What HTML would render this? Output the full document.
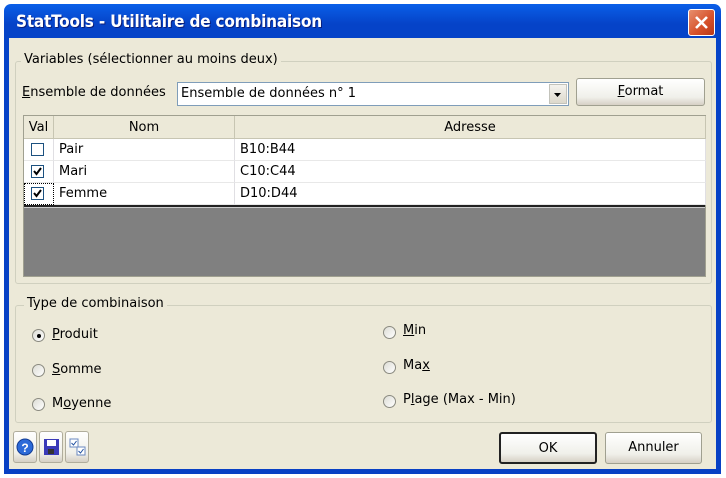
<!DOCTYPE html>
<html><head><meta charset="utf-8"><style>
*{box-sizing:border-box}
body{margin:0;width:726px;height:478px;background:#fff;position:relative;overflow:hidden;font-family:"DejaVu Sans","Liberation Sans",sans-serif;font-size:13px;color:#000}
.a{position:absolute}
.win{left:4px;top:4px;width:717px;height:470px;border-radius:7px 7px 0 0;background:linear-gradient(#0a5fe8,#0543c8 20px,#0840c4)}
.title{left:16px;top:12px;color:#fff;font-weight:bold;font-size:17px;font-family:"DejaVu Sans Condensed","DejaVu Sans",sans-serif;text-shadow:1px 1px #0a1e7a;letter-spacing:-0.2px}
.close{left:688px;top:9px;width:27px;height:27px;border:1px solid #fff;border-radius:3px;background:linear-gradient(135deg,#e7906e,#d6502a 60%,#b83818)}
.body{left:9px;top:38px;width:707px;height:431px;background:#ece9d8}
.gb{border:1px solid #d0d0bf;border-radius:3px}
.lbl{background:#ece9d8;padding:0 3px}
.btn{border:1px solid #003c74;border-radius:3px;background:linear-gradient(#fff,#f0f0ea 70%,#d6d0c5);text-align:center}
.cell{position:absolute;height:22px;line-height:22px;padding-left:5px;border-right:1px solid #e0dfe3;border-bottom:1px solid #e8e8e8;background:#fff}
.hd{background:#ece9d8;border-right:1px solid #c7c5b2;border-bottom:1px solid #c7c5b2;text-align:center;padding:0;height:23px;line-height:23px}
.cb{position:absolute;width:13px;height:13px;border:1px solid #1c5180;background:#fff}
.rd{position:absolute;width:13px;height:13px;border-radius:50%;border:1px solid #8a8a80;background:linear-gradient(135deg,#dcdcd4,#fff)}
u{text-decoration:underline}
</style></head><body>
<div class="a win"></div>
<div class="a title">StatTools - Utilitaire de combinaison</div>
<div class="a close"><svg width="25" height="25" viewBox="0 0 25 25"><path d="M7 7L18 18M18 7L7 18" stroke="#fff" stroke-width="2.6"/></svg></div>
<div class="a body"></div>

<div class="a gb" style="left:15px;top:61px;width:697px;height:223px"></div>
<div class="a lbl" style="left:21px;top:52px">Variables (sélectionner au moins deux)</div>
<div class="a" style="left:22px;top:85px"><u>E</u>nsemble de données</div>
<div class="a" style="left:177px;top:82px;width:392px;height:24px;border:1px solid #7f9db9;background:#fff;padding:3px 3px;">Ensemble de données n° 1</div>
<div class="a" style="left:549px;top:84px;width:18px;height:20px;background:linear-gradient(#f4f3ee,#ddd9cc);border:1px solid #c3c3bb"><svg width="16" height="18"><path d="M4 8h7l-3.5 4z" fill="#000"/></svg></div>
<div class="a btn" style="left:576px;top:78px;width:129px;height:28px;line-height:26px;border-color:#a0a090"><u>F</u>ormat</div>

<div class="a" style="left:23px;top:115px;width:683px;height:162px;background:#808080;border:1px solid #a0a090">
 <div class="cell hd" style="left:0;top:0;width:30px">Val</div>
 <div class="cell hd" style="left:30px;top:0;width:181px">Nom</div>
 <div class="cell hd" style="left:211px;top:0;width:471px">Adresse</div>
 <div class="cell" style="left:0;top:23px;width:30px"></div><div class="cb" style="left:7px;top:27px"></div>
 <div class="cell" style="left:30px;top:23px;width:181px">Pair</div>
 <div class="cell" style="left:211px;top:23px;width:471px">B10:B44</div>
 <div class="cell" style="left:0;top:45px;width:30px"></div><div class="cb" style="left:7px;top:49px"><svg width="11" height="11"><path d="M2 5l2.5 3L9 2" stroke="#000" stroke-width="2" fill="none"/></svg></div>
 <div class="cell" style="left:30px;top:45px;width:181px">Mari</div>
 <div class="cell" style="left:211px;top:45px;width:471px">C10:C44</div>
 <div class="cell" style="left:0;top:67px;width:30px;border:1px dotted #000"></div><div class="cb" style="left:7px;top:71px"><svg width="11" height="11"><path d="M2 5l2.5 3L9 2" stroke="#000" stroke-width="2" fill="none"/></svg></div>
 <div class="cell" style="left:30px;top:67px;width:181px">Femme</div>
 <div class="cell" style="left:211px;top:67px;width:471px">D10:D44</div>
 <div class="a" style="left:0;top:89px;width:681px;height:3px;border-top:2px solid #222;border-bottom:1px solid #ccc"></div>
</div>

<div class="a gb" style="left:15px;top:305px;width:697px;height:118px"></div>
<div class="a lbl" style="left:24px;top:296px">Type de combinaison</div>
<div class="rd" style="left:32px;top:329px"><div style="position:absolute;left:4px;top:4px;width:4px;height:4px;border-radius:50%;background:#000"></div></div>
<div class="a" style="left:52px;top:327px"><u>P</u>roduit</div>
<div class="rd" style="left:32px;top:364px"></div><div class="a" style="left:52px;top:362px"><u>S</u>omme</div>
<div class="rd" style="left:32px;top:398px"></div><div class="a" style="left:52px;top:396px">M<u>o</u>yenne</div>
<div class="rd" style="left:383px;top:326px"></div><div class="a" style="left:403px;top:323px"><u>M</u>in</div>
<div class="rd" style="left:383px;top:361px"></div><div class="a" style="left:403px;top:358px">Ma<u>x</u></div>
<div class="rd" style="left:383px;top:395px"></div><div class="a" style="left:403px;top:392px">P<u>l</u>age (Max - Min)</div>

<div class="a btn" style="left:13px;top:431px;width:24px;height:32px;border-color:#b0ad9c"><svg width="22" height="30"><circle cx="11" cy="15" r="8" fill="#2c6ad8" stroke="#123c94"/><text x="11" y="20" font-size="12" font-weight="bold" fill="#fff" text-anchor="middle" font-family="Liberation Sans">?</text></svg></div>
<div class="a btn" style="left:39px;top:431px;width:24px;height:32px;border-color:#b0ad9c"><svg width="22" height="30"><rect x="4" y="7" width="15" height="16" fill="#3a3ab8"/><rect x="7" y="8" width="9" height="6" fill="#fff"/><rect x="8" y="17" width="6" height="5" fill="#333"/></svg></div>
<div class="a btn" style="left:65px;top:431px;width:24px;height:32px;border-color:#b0ad9c"><svg width="22" height="30"><rect x="4" y="7" width="8" height="8" fill="#fff" stroke="#6a88c0"/><rect x="11" y="15" width="8" height="8" fill="#fff" stroke="#6a88c0"/><path d="M5.5 11l2 2 3-4M12.5 19l2 2 3-4" stroke="#2050a0" fill="none"/></svg></div>

<div class="a btn" style="left:499px;top:432px;width:98px;height:32px;line-height:30px;border:2px solid #222">OK</div>
<div class="a btn" style="left:605px;top:432px;width:97px;height:32px;line-height:30px;border-color:#a0a090">Annuler</div>
</body></html>
